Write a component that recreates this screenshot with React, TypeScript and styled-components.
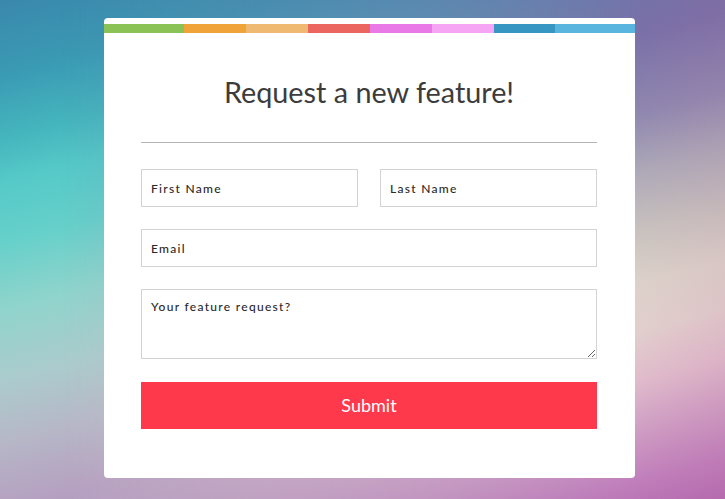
import React from "react";
import styled, { createGlobalStyle } from "styled-components";

const Global = createGlobalStyle`
  html, body { margin: 0; padding: 0; height: 100%; overflow: hidden; }
  body {
    font-family: "Lato", sans-serif;
    background: linear-gradient(166deg,
      #3a88ac 0px, #3a9ab4 72px, #45b5bd 134px, #55c9c8 177px, #66d0ca 235px,
      #90d4cc 302px, #abcbcd 370px, #b6b8c7 427px, #b5a0c1 494px, #b08cbc 680px) no-repeat;
    background-size: 725px 499px;
  }
`;

const Page = styled.main`
  position: relative;
  display: flex;
  width: 725px;
  height: 499px;
  padding: 18px 0 0 104px;
  box-sizing: border-box;

  &::before {
    content: "";
    position: absolute;
    inset: 0;
    background:
      linear-gradient(to right, rgba(180, 90, 140, 0) 630px, rgba(180, 90, 140, 0.1) 725px),
      linear-gradient(166deg,
        #5a7cac 0, #7a70a8 188px, #9088b0 265px, #aeaab8 322px, #c9c3bf 380px, #dcd2ca 428px,
        #e2d0ce 476px, #e0bccc 524px, #cf9ec4 572px, #c07fbb 620px, #b468b0 668px);
    -webkit-mask-image: linear-gradient(to right, transparent 60px, #000 640px);
    mask-image: linear-gradient(to right, transparent 60px, #000 640px);
  }
`;

const Card = styled.section`
  position: relative;
  width: 531px;
  height: 460px;
  box-sizing: border-box;
  padding-top: 6px;
  background: #fff;
  border-radius: 4px;
`;

const Strip = styled.div`
  display: flex;
  height: 9px;
`;

const Segment = styled.span<{ $color: string; $width: number }>`
  display: block;
  flex: 0 0 ${(p) => p.$width}px;
  background: ${(p) => p.$color};
`;

const Body = styled.div`
  padding: 0 38px 0 37px;
`;

const Title = styled.h1`
  margin: 0;
  padding-top: 41px;
  padding-bottom: 32px;
  font-size: 28.8px;
  line-height: 36px;
  font-weight: 400;
  text-align: center;
  color: #3c3c3c;
  border-bottom: 1px solid #b4b4b4;
`;

const Form = styled.form`
  display: flex;
  flex-direction: column;
  gap: 22px;
  padding-top: 26px;
`;

const Row = styled.div`
  display: flex;
  gap: 22px;
`;

const fieldCss = `
  display: block;
  width: 100%;
  min-width: 0;
  box-sizing: border-box;
  margin: 0;
  padding: 0 9px;
  border: 1px solid #d3d3d3;
  border-radius: 0;
  background: #fff;
  outline: none;
  font-family: "Lato", sans-serif;
  font-size: 12px;
  font-weight: 500;
  letter-spacing: 1.3px;
  color: #2a2a2a;
  &::placeholder { color: #2a2a2a; opacity: 1; }
`;

const Input = styled.input`
  ${fieldCss}
  height: 38px;
`;

const TextArea = styled.textarea`
  ${fieldCss}
  height: 70px;
  padding-top: 9px;
  resize: vertical;
`;

const Submit = styled.button`
  display: block;
  width: 100%;
  height: 47px;
  margin-top: 1px;
  padding: 0 0 2px;
  border: 0;
  background: #ff394c;
  color: #fff;
  font-family: "Lato", sans-serif;
  font-size: 18px;
  font-weight: 400;
`;

const segments: [string, number][] = [
  ["#8bc255", 80],
  ["#f0a338", 62],
  ["#efb971", 62],
  ["#ea665f", 62],
  ["#e879e6", 62],
  ["#f5a5f3", 62],
  ["#3897c2", 61],
  ["#5ab5de", 80],
];

export default function App() {
  return (
    <>
      <Global />
      <Page>
        <Card>
          <Strip>
            {segments.map(([color, width]) => (
              <Segment key={color} $color={color} $width={width} />
            ))}
          </Strip>
          <Body>
            <Title>Request a new feature!</Title>
            <Form onSubmit={(e) => e.preventDefault()}>
              <Row>
                <Input placeholder="First Name" />
                <Input placeholder="Last Name" />
              </Row>
              <Input placeholder="Email" />
              <TextArea placeholder="Your feature request?" />
              <Submit type="submit">Submit</Submit>
            </Form>
          </Body>
        </Card>
      </Page>
    </>
  );
}
